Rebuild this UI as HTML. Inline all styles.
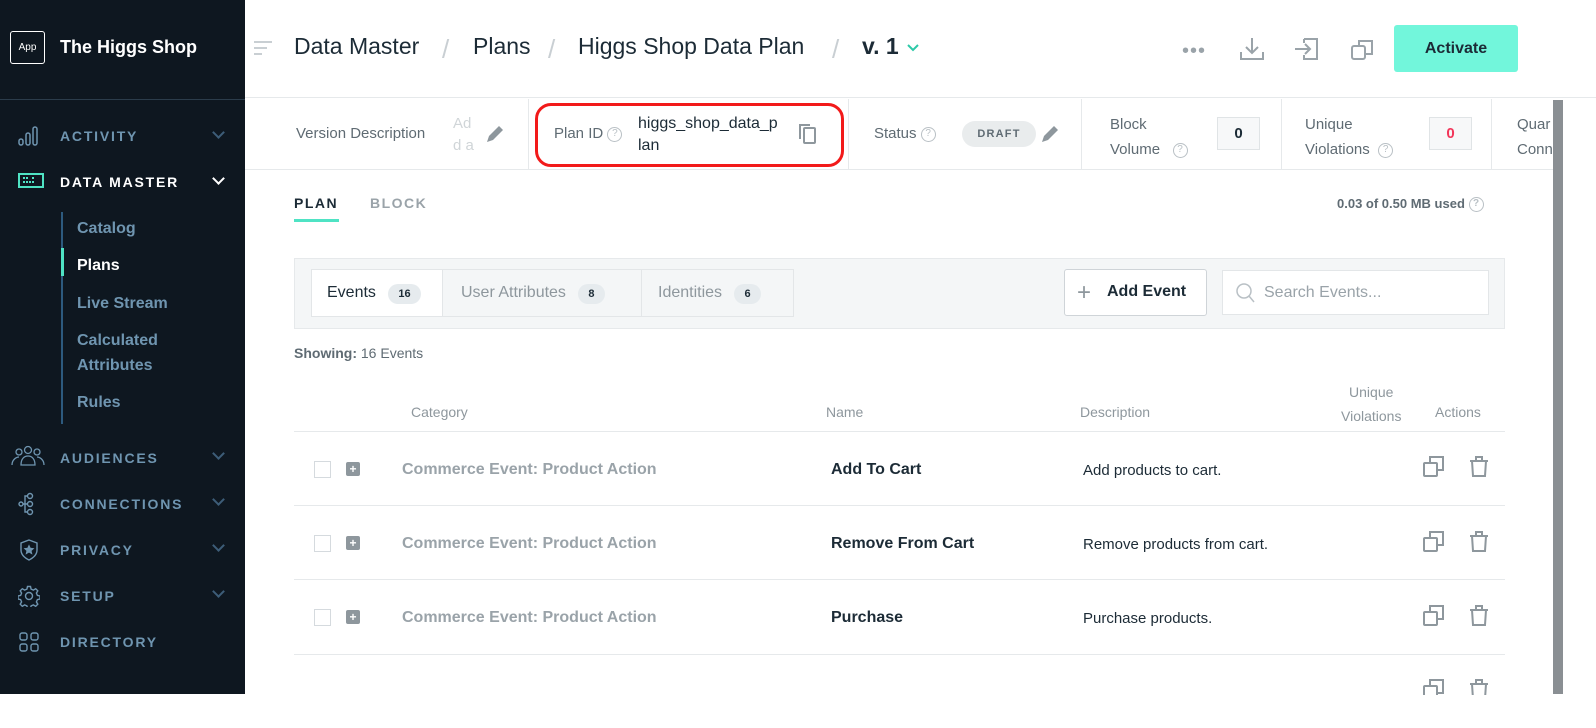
<!DOCTYPE html>
<html><head><style>
*{box-sizing:border-box;margin:0;padding:0}
body{width:1596px;height:694px;overflow:hidden;font-family:"Liberation Sans",sans-serif;background:#fff;position:relative}
.sb{position:absolute;left:0;top:0;width:245px;height:694px;background:#0e1720}
.abs{position:absolute}
.nav{position:absolute;left:60px;font-size:14px;font-weight:bold;letter-spacing:1.8px;color:#6f95b0}
.chev{position:absolute;left:214px;width:9px;height:9px;border-right:2px solid #3d5d78;border-bottom:2px solid #3d5d78;transform:rotate(45deg)}
.sub{position:absolute;left:77px;font-size:16px;font-weight:bold;color:#6f95b0}
.g{color:#5f6b73}
.hdr{position:absolute;left:245px;top:0;right:0;height:98px;border-bottom:1px solid #e6e9eb}
.bc{position:absolute;top:33px;font-size:23px;color:#1c2b36}
.sl{position:absolute;top:34px;font-size:26px;color:#c9cfd3;font-weight:300}
.lbl{font-size:15px;color:#5f6b73}
.q{display:inline-block;width:15px;height:15px;border:1.5px solid #b9c0c5;border-radius:50%;font-size:10px;color:#b9c0c5;text-align:center;line-height:12px;vertical-align:middle}
.vs{position:absolute;top:99px;height:70px;border-right:1px solid #e6e9eb}
.badge{display:inline-block;background:#e6ebee;border-radius:12px;font-size:11px;font-weight:bold;padding:4px 10px;color:#1c2b36}
.row{position:absolute;left:294px;width:1211px;height:74px;border-top:1px solid #e6e9eb}
.cat{position:absolute;left:108px;font-size:16px;font-weight:bold;color:#9aa3a9}
.nm{position:absolute;left:537px;font-size:16px;font-weight:bold;color:#1c2b36}
.ds{position:absolute;left:789px;font-size:15px;color:#1c2b36}
.cb{position:absolute;left:20px;width:17px;height:17px;border:1px solid #d5dade}
.pl{position:absolute;left:52px;width:14px;height:14px;background:#8e979d;border-radius:2px;color:#fff;font-size:12px;line-height:14px;text-align:center;font-weight:bold}
</style></head><body>
<div class="sb">
 <div class="abs" style="left:10px;top:31px;width:35px;height:33px;border:1px solid #fff;border-radius:3px;color:#fff;font-size:10px;text-align:center;line-height:31px">App</div>
 <div class="abs" style="left:60px;top:37px;color:#fff;font-size:18px;font-weight:bold">The Higgs Shop</div>
 <div class="abs" style="left:0;top:99px;width:245px;height:1px;background:#2b3c4b"></div>
 <svg class="abs" style="left:18px;top:125px" width="22" height="22" viewBox="0 0 22 22" fill="none" stroke="#6f95b0" stroke-width="1.5"><rect x="1" y="14" width="4" height="6" rx="2"/><rect x="8" y="8" width="4" height="12" rx="2"/><rect x="15" y="2" width="4" height="18" rx="2"/></svg>
 <div class="nav" style="top:128px">ACTIVITY</div><div class="chev" style="top:128px"></div>
 <svg class="abs" style="left:18px;top:172px" width="26" height="18" viewBox="0 0 26 18" fill="none" stroke="#4fe3c4" stroke-width="2"><rect x="1" y="2" width="24" height="13"/><path d="M5 6h6M14 6h3M5 10h12" stroke-dasharray="2 1"/></svg>
 <div class="nav" style="top:174px;color:#fff">DATA MASTER</div>
 <div class="chev" style="top:174px;border-color:#fff"></div>
 <div class="abs" style="left:61px;top:212px;width:3px;height:112px;background:#2d5a7e;width:2px"></div>
 <div class="abs" style="left:61px;top:248px;width:3px;height:28px;background:#4fe3c4"></div>
 <div class="abs" style="left:61px;top:276px;width:2px;height:48px;background:#2d5a7e"></div>
 <div class="abs" style="left:61px;top:324px;width:2px;height:100px;background:#2d5a7e"></div>
 <div class="sub" style="top:220px">Catalog</div>
 <div class="sub" style="top:257px;color:#fff">Plans</div>
 <div class="sub" style="top:295px">Live Stream</div>
 <div class="sub" style="top:332px;line-height:25px;top:328px">Calculated<br>Attributes</div>
 <div class="sub" style="top:394px">Rules</div>
 <svg class="abs" style="left:11px;top:445px" width="34" height="22" viewBox="0 0 34 22" fill="none" stroke="#6f95b0" stroke-width="1.3"><circle cx="8" cy="7" r="3"/><circle cx="17" cy="5" r="3.5"/><circle cx="26" cy="7" r="3"/><path d="M1 20c0-5 4-8 7-8M10 20c0-6 3-9 7-9s7 3 7 9zM33 20c0-5-4-8-7-8"/></svg>
 <div class="nav" style="top:450px">AUDIENCES</div><div class="chev" style="top:449px"></div>
 <svg class="abs" style="left:18px;top:492px" width="22" height="24" viewBox="0 0 22 24" fill="none" stroke="#6f95b0" stroke-width="1.4"><circle cx="3" cy="12" r="2"/><circle cx="12" cy="4" r="2.5"/><circle cx="12" cy="12" r="2.5"/><circle cx="12" cy="20" r="2.5"/><path d="M5 12h4.5M7 12V4h2.5M7 12v8h2.5"/></svg>
 <div class="nav" style="top:496px">CONNECTIONS</div><div class="chev" style="top:495px"></div>
 <svg class="abs" style="left:18px;top:538px" width="22" height="24" viewBox="0 0 22 24" fill="none" stroke="#6f95b0" stroke-width="1.4"><path d="M11 2l8 3v7c0 5-4 8-8 10-4-2-8-5-8-10V5z"/><path d="M11 8l1.2 2.5 2.6.3-2 1.8.6 2.6-2.4-1.4-2.4 1.4.6-2.6-2-1.8 2.6-.3z" fill="#6f95b0"/></svg>
 <div class="nav" style="top:542px">PRIVACY</div><div class="chev" style="top:541px"></div>
 <svg class="abs" style="left:18px;top:585px" width="22" height="22" viewBox="0 0 22 22" fill="none" stroke="#6f95b0" stroke-width="1.4"><circle cx="11" cy="11" r="3.5"/><path d="M9.5 1.5h3l.6 2.6 2.3 1 2.3-1.4 2.1 2.1-1.4 2.3 1 2.3 2.6.6v3l-2.6.6-1 2.3 1.4 2.3-2.1 2.1-2.3-1.4-2.3 1-.6 2.6h-3l-.6-2.6-2.3-1-2.3 1.4-2.1-2.1 1.4-2.3-1-2.3-2.6-.6v-3l2.6-.6 1-2.3-1.4-2.3 2.1-2.1 2.3 1.4 2.3-1z"/></svg>
 <div class="nav" style="top:588px">SETUP</div><div class="chev" style="top:587px"></div>
 <svg class="abs" style="left:19px;top:632px" width="20" height="20" viewBox="0 0 20 20" fill="none" stroke="#6f95b0" stroke-width="1.4"><rect x="1" y="1" width="7" height="7" rx="2"/><rect x="12" y="1" width="7" height="7" rx="2"/><rect x="1" y="12" width="7" height="7" rx="2"/><rect x="12" y="12" width="7" height="7" rx="2"/></svg>
 <div class="nav" style="top:634px">DIRECTORY</div>
</div>

<div class="hdr">
 <svg class="abs" style="left:9px;top:40px" width="18" height="16"><path d="M0 2h18M0 8h13M0 14h8" stroke="#c9cfd3" stroke-width="2"/></svg>
</div>
<div class="bc" style="left:294px">Data Master</div>
<div class="sl" style="left:442px">/</div>
<div class="bc" style="left:473px">Plans</div>
<div class="sl" style="left:548px">/</div>
<div class="bc" style="left:578px">Higgs Shop Data Plan</div>
<div class="sl" style="left:832px">/</div>
<div class="bc" style="left:862px;font-weight:bold">v. 1</div>
<svg class="abs" style="left:906px;top:43px" width="14" height="10"><path d="M2 2l5 5 5-5" stroke="#2dc9a8" stroke-width="2" fill="none"/></svg>
<div class="abs" style="left:1182px;top:40px;color:#9aa3a9;font-size:20px;letter-spacing:1px">•••</div>
<svg class="abs" style="left:1239px;top:36px" width="26" height="26" viewBox="0 0 26 26" fill="none" stroke="#9aa3a9" stroke-width="2"><path d="M13 2v14M7 11l6 6 6-6M2 16v7h22v-7"/></svg>
<svg class="abs" style="left:1294px;top:36px" width="26" height="26" viewBox="0 0 26 26" fill="none" stroke="#9aa3a9" stroke-width="2"><path d="M1 13h15M11 8l5 5-5 5M10 3h13v20H10v-4M10 3v4"/></svg>
<svg class="abs" style="left:1351px;top:38px" width="24" height="24" viewBox="0 0 24 24" fill="none" stroke="#9aa3a9" stroke-width="2"><rect x="1" y="8" width="13" height="13" rx="2"/><path d="M8 8V3h13v13h-7"/></svg>
<div class="abs" style="left:1394px;top:25px;width:124px;height:47px;background:#72f6db;border-radius:3px;text-align:center;line-height:47px;font-size:16px;font-weight:bold;color:#1c2b36">Activate</div>

<div class="vs" style="left:245px;width:284px"></div>
<div class="abs lbl" style="left:296px;top:125px">Version Description</div>
<div class="abs" style="left:453px;top:113px;font-size:15px;line-height:22px;color:#d0d5d8">Ad<br>d a</div>
<svg class="abs" style="left:483px;top:122px" width="24" height="24"><path d="M4 20l2-6L16 4l4 4-10 10z" fill="#8e979d"/></svg>
<div class="vs" style="left:529px;width:320px"></div>
<div class="abs" style="left:535px;top:103px;width:309px;height:64px;border:3px solid #f21a1a;border-radius:16px"></div>
<div class="abs lbl" style="left:554px;top:125px">Plan ID <span class="q">?</span></div>
<div class="abs" style="left:638px;top:113px;font-size:16px;line-height:22px;color:#1c2b36">higgs_shop_data_p<br>lan</div>
<svg class="abs" style="left:798px;top:123px" width="20" height="22" viewBox="0 0 20 22" fill="none" stroke="#8e979d" stroke-width="2"><rect x="6" y="5" width="11" height="15" rx="1"/><path d="M2 16V2h10"/></svg>
<div class="vs" style="left:849px;width:233px"></div>
<div class="abs lbl" style="left:874px;top:125px">Status <span class="q">?</span></div>
<div class="abs" style="left:962px;top:121px;width:74px;height:26px;background:#e9eced;border-radius:13px;font-size:11px;font-weight:bold;letter-spacing:1.2px;color:#5f6b73;text-align:center;line-height:26px">DRAFT</div>
<svg class="abs" style="left:1038px;top:122px" width="24" height="24"><path d="M4 20l2-6L16 4l4 4-10 10z" fill="#8e979d"/></svg>
<div class="vs" style="left:1082px;width:200px"></div>
<div class="abs lbl" style="left:1110px;top:112px;line-height:25px">Block<br>Volume &nbsp; <span class="q">?</span></div>
<div class="abs" style="left:1217px;top:117px;width:43px;height:33px;border:1px solid #e0e4e6;background:#f7f8f9;text-align:center;line-height:31px;font-size:15px;font-weight:bold;color:#1c2b36">0</div>
<div class="vs" style="left:1282px;width:210px"></div>
<div class="abs lbl" style="left:1305px;top:112px;line-height:25px">Unique<br>Violations &nbsp;<span class="q">?</span></div>
<div class="abs" style="left:1429px;top:117px;width:43px;height:33px;border:1px solid #e0e4e6;background:#f7f8f9;text-align:center;line-height:31px;font-size:15px;font-weight:bold;color:#f2365a">0</div>
<div class="abs lbl" style="left:1517px;top:112px;line-height:25px">Quar<br>Conn</div>
<div class="abs" style="left:0;top:169px;left:245px;width:1351px;height:1px;background:#e6e9eb"></div>
<div class="abs" style="left:1553px;top:100px;width:10px;height:594px;background:#8a8f93"></div>
<div class="abs" style="left:1563px;top:100px;width:33px;height:594px;background:#fff"></div>

<div class="abs" style="left:294px;top:195px;font-size:14px;font-weight:bold;letter-spacing:1.5px;color:#1c2b36">PLAN</div>
<div class="abs" style="left:294px;top:219px;width:45px;height:3px;background:#4fe3c4"></div>
<div class="abs" style="left:370px;top:195px;font-size:14px;font-weight:bold;letter-spacing:1.5px;color:#9aa3a9">BLOCK</div>
<div class="abs" style="left:1337px;top:196px;font-size:13px;font-weight:bold;color:#5f6b73">0.03 of 0.50 MB used <span class="q">?</span></div>

<div class="abs" style="left:294px;top:258px;width:1211px;height:71px;background:#f4f6f7;border:1px solid #e6e9eb"></div>
<div class="abs" style="left:311px;top:269px;width:483px;height:48px;border:1px solid #e3e6e8;background:#f4f6f7"></div>
<div class="abs" style="left:312px;top:270px;width:131px;height:46px;background:#fff;border-right:1px solid #e3e6e8"></div>
<div class="abs" style="left:327px;top:284px;font-size:16px;color:#1c2b36">Events <span class="badge" style="margin-left:8px">16</span></div>
<div class="abs" style="left:641px;top:270px;width:1px;height:46px;background:#e3e6e8"></div>
<div class="abs" style="left:461px;top:284px;font-size:16px;color:#8e979d">User Attributes <span class="badge" style="margin-left:8px">8</span></div>
<div class="abs" style="left:658px;top:284px;font-size:16px;color:#8e979d">Identities <span class="badge" style="margin-left:8px">6</span></div>
<div class="abs" style="left:1064px;top:269px;width:143px;height:47px;border:1px solid #cfd4d8;border-radius:3px;background:#fff"></div>
<div class="abs" style="left:1077px;top:279px;font-size:24px;color:#8e979d;font-weight:300">+</div>
<div class="abs" style="left:1107px;top:283px;font-size:16px;font-weight:bold;color:#1c2b36">Add Event</div>
<div class="abs" style="left:1222px;top:270px;width:267px;height:45px;border:1px solid #e3e6e8;background:#fff"></div>
<svg class="abs" style="left:1235px;top:282px" width="20" height="22" fill="none" stroke="#b9c0c5" stroke-width="1.5"><circle cx="9" cy="9" r="7"/><path d="M14 14l5 6"/></svg>
<div class="abs" style="left:1264px;top:284px;font-size:16px;color:#9aa3a9">Search Events...</div>

<div class="abs" style="left:294px;top:345px;font-size:14px;color:#5f6b73"><b>Showing:</b> 16 Events</div>
<div class="abs" style="left:1341px;top:380px;font-size:14px;color:#8e979d;text-align:center;line-height:24px">Unique<br>Violations</div>
<div class="abs" style="left:411px;top:404px;font-size:14px;color:#8e979d">Category</div>
<div class="abs" style="left:826px;top:404px;font-size:14px;color:#8e979d">Name</div>
<div class="abs" style="left:1080px;top:404px;font-size:14px;color:#8e979d">Description</div>
<div class="abs" style="left:1435px;top:404px;font-size:14px;color:#8e979d">Actions</div>

<div class="row" style="top:431px"><div class="cb" style="top:29px"></div><div class="pl" style="top:30px">+</div><div class="cat" style="top:29px">Commerce Event: Product Action</div><div class="nm" style="top:29px">Add To Cart</div><div class="ds" style="top:30px">Add products to cart.</div></div>
<div class="row" style="top:505px"><div class="cb" style="top:29px"></div><div class="pl" style="top:30px">+</div><div class="cat" style="top:29px">Commerce Event: Product Action</div><div class="nm" style="top:29px">Remove From Cart</div><div class="ds" style="top:30px">Remove products from cart.</div></div>
<div class="row" style="top:579px"><div class="cb" style="top:29px"></div><div class="pl" style="top:30px">+</div><div class="cat" style="top:29px">Commerce Event: Product Action</div><div class="nm" style="top:29px">Purchase</div><div class="ds" style="top:30px">Purchase products.</div></div>
<div class="row" style="top:654px"></div>

<svg class="abs" style="left:1422px;top:455px" width="70" height="240" fill="none" stroke="#8e979d" stroke-width="2">
 <g><rect x="2" y="8" width="13" height="13" rx="1"/><path d="M8 8V2h13v13h-6"/><path d="M48 6h18M54 6V2h6v4M50 6l1 15h12l1-15"/></g>
 <g transform="translate(0,75)"><rect x="2" y="8" width="13" height="13" rx="1"/><path d="M8 8V2h13v13h-6"/><path d="M48 6h18M54 6V2h6v4M50 6l1 15h12l1-15"/></g>
 <g transform="translate(0,149)"><rect x="2" y="8" width="13" height="13" rx="1"/><path d="M8 8V2h13v13h-6"/><path d="M48 6h18M54 6V2h6v4M50 6l1 15h12l1-15"/></g>
 <g transform="translate(0,223)"><rect x="2" y="8" width="13" height="13" rx="1"/><path d="M8 8V2h13v13h-6"/><path d="M48 6h18M54 6V2h6v4M50 6l1 15h12l1-15"/></g>
</svg>
</body></html>
